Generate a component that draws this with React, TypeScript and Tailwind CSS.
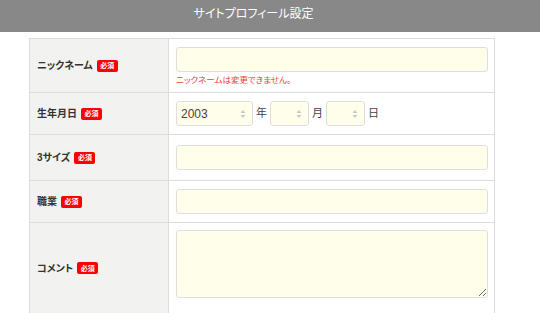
const font = {
  fontFamily: '"Liberation Sans", "Noto Sans CJK JP", sans-serif',
  fontFeatureSettings: '"palt"',
};

function Badge() {
  return (
    <span className="ml-[4px] inline-flex h-[12px] w-[21px] items-center justify-center rounded-[2px] bg-[#ff0000] text-[7px] leading-none text-white">
      必須
    </span>
  );
}

function Spinner() {
  return (
    <svg width="6" height="10" viewBox="0 0 6 10" className="shrink-0">
      <path d="M3 1 L5.5 4 L0.5 4 Z" fill="#c8c8c8" />
      <path d="M3 9 L5.5 6 L0.5 6 Z" fill="#c8c8c8" />
    </svg>
  );
}

function NumBox({ value, width }: { value?: string; width: string }) {
  return (
    <div
      className={`flex h-[25px] ${width} items-center justify-between rounded-[3px] border border-[#dedede] bg-[#fefeeb] pl-[4px] pr-[6px] text-[12px] text-[#444]`}
    >
      <span>{value}</span>
      <Spinner />
    </div>
  );
}

function Row({
  label,
  height,
  children,
  last,
  top,
}: {
  label: string;
  height: string;
  children: React.ReactNode;
  last?: boolean;
  top?: boolean;
}) {
  return (
    <div className={`flex ${height} ${last ? "" : "border-b border-[#dcdcdc]"}`}>
      <div className="flex w-[139px] shrink-0 items-center border-r border-[#dcdcdc] bg-[#f2f2f0] pl-[7px] text-[10px] font-bold text-[#333]">
        {label}
        <Badge />
      </div>
      <div className={`flex flex-1 flex-col pl-[7px] pr-[6px] ${top ? "justify-start pt-[7px]" : "justify-center"}`}>
        {children}
      </div>
    </div>
  );
}

export default function App() {
  return (
    <div className="h-[313px] w-[540px] overflow-hidden bg-white" style={font}>
      <div className="flex h-[32px] items-center justify-center bg-[#888888] pb-[4px] pr-[33px] text-[12px] text-white">
        サイトプロフィール設定
      </div>
      <div className="ml-[29px] mt-[6px] w-[466px] border border-[#dcdcdc]">
        <Row label="ニックネーム" height="h-[54px]">
          <div className="h-[25px] w-full rounded-[3px] border border-[#dedede] bg-[#fefeeb]" />
          <p className="mt-[3px] text-[8.5px] leading-[10px] text-[#f03c3c]">ニックネームは変更できません。</p>
        </Row>
        <Row label="生年月日" height="h-[42px]">
          <div className="flex items-center text-[11px] text-[#444]">
            <NumBox value="2003" width="w-[77px]" />
            <span className="mx-[3px]">年</span>
            <NumBox width="w-[39px]" />
            <span className="mx-[3px]">月</span>
            <NumBox width="w-[39px]" />
            <span className="ml-[3px]">日</span>
          </div>
        </Row>
        <Row label="3サイズ" height="h-[46px]">
          <div className="h-[25px] w-full rounded-[3px] border border-[#dedede] bg-[#fefeeb]" />
        </Row>
        <Row label="職業" height="h-[42px]">
          <div className="h-[25px] w-full rounded-[3px] border border-[#dedede] bg-[#fefeeb]" />
        </Row>
        <Row label="コメント" height="h-[90px]" last top>
          <textarea className="block h-[68px] w-full rounded-[3px] border border-[#dedede] bg-[#fefeeb] outline-none" />
        </Row>
      </div>
    </div>
  );
}
